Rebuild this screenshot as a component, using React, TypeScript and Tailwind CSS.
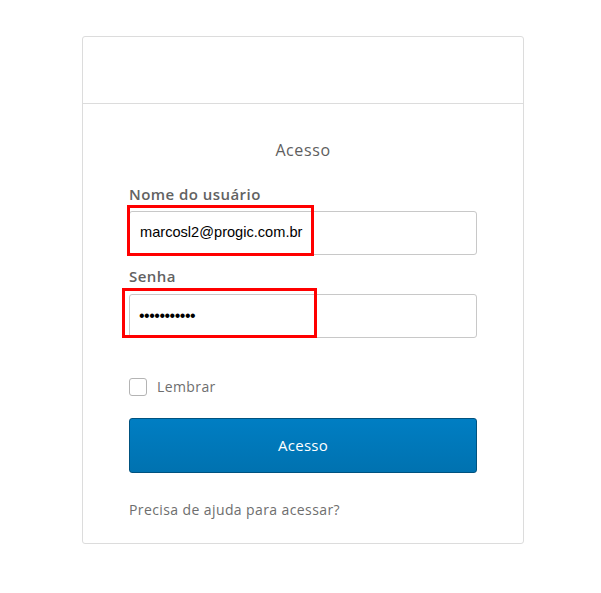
import React, { useState } from "react";

const font = { fontFamily: '"Open Sans", "DejaVu Sans", sans-serif' };
const arial = { fontFamily: '"Liberation Sans", Arial, sans-serif' };

export default function App() {
  const [lembrar, setLembrar] = useState(false);

  return (
    <div className="min-h-[593px] w-full bg-white pt-[36px]" style={font}>
      <div className="ml-[82px] w-[442px] rounded-[3px] border border-[#dcdcdc] bg-white">
        <div className="h-[67px] border-b border-[#dcdcdc]"></div>
        <div className="px-[46px] pb-[23px]">
          <h2 className="mt-[36px] text-center text-[16px] leading-[20px] tracking-[0.6px] text-[#5e5e5e]">
            Acesso
          </h2>

          {/* usuario */}
          <label className="mt-[24px] block text-[15px] font-semibold leading-[20px] tracking-[0.45px] text-[#626262]">
            Nome do usuário
          </label>
          <div className="relative mt-[7px]">
            <div className="flex h-[44px] items-center rounded-[3px] border border-[#c8c8c8] px-[10px]">
              <span className="text-[14.6px] text-black" style={arial}>
                marcosl2@progic.com.br
              </span>
            </div>
            <div className="absolute left-[-2px] top-[-6px] h-[51px] w-[187px] border-[3px] border-[#ff0000]"></div>
          </div>

          {/* senha */}
          <label className="mt-[11px] block text-[15px] font-semibold leading-[20px] tracking-[0.45px] text-[#626262]">
            Senha
          </label>
          <div className="relative mt-[8px]">
            <div className="flex h-[44px] items-center rounded-[3px] border border-[#c8c8c8] px-[9px]">
              <span className="text-[16px] tracking-[-0.5px] text-black" style={arial}>
                •••••••••••
              </span>
            </div>
            <div className="absolute left-[-7px] top-[-6px] h-[50px] w-[195px] border-[3px] border-[#ff0000]"></div>
          </div>

          <div className="mt-[38px] flex items-center gap-[10px]">
            <button
              onClick={() => setLembrar(!lembrar)}
              className="h-[18px] w-[18px] rounded-[3px] border border-[#b4b4b4] bg-white"
            ></button>
            <span className="text-[14px] tracking-[0.4px] text-[#6e6e6e]">Lembrar</span>
          </div>

          <button className="mt-[21px] h-[55px] w-full rounded-[3px] border border-[#00527f] bg-gradient-to-b from-[#007ec3] to-[#0072b0] text-[15px] tracking-[0.3px] text-white">
            Acesso
          </button>

          <p className="mt-[27px] text-[14px] leading-[20px] tracking-[0.4px] text-[#6e6e6e]">
            Precisa de ajuda para acessar?
          </p>
        </div>
      </div>
    </div>
  );
}
